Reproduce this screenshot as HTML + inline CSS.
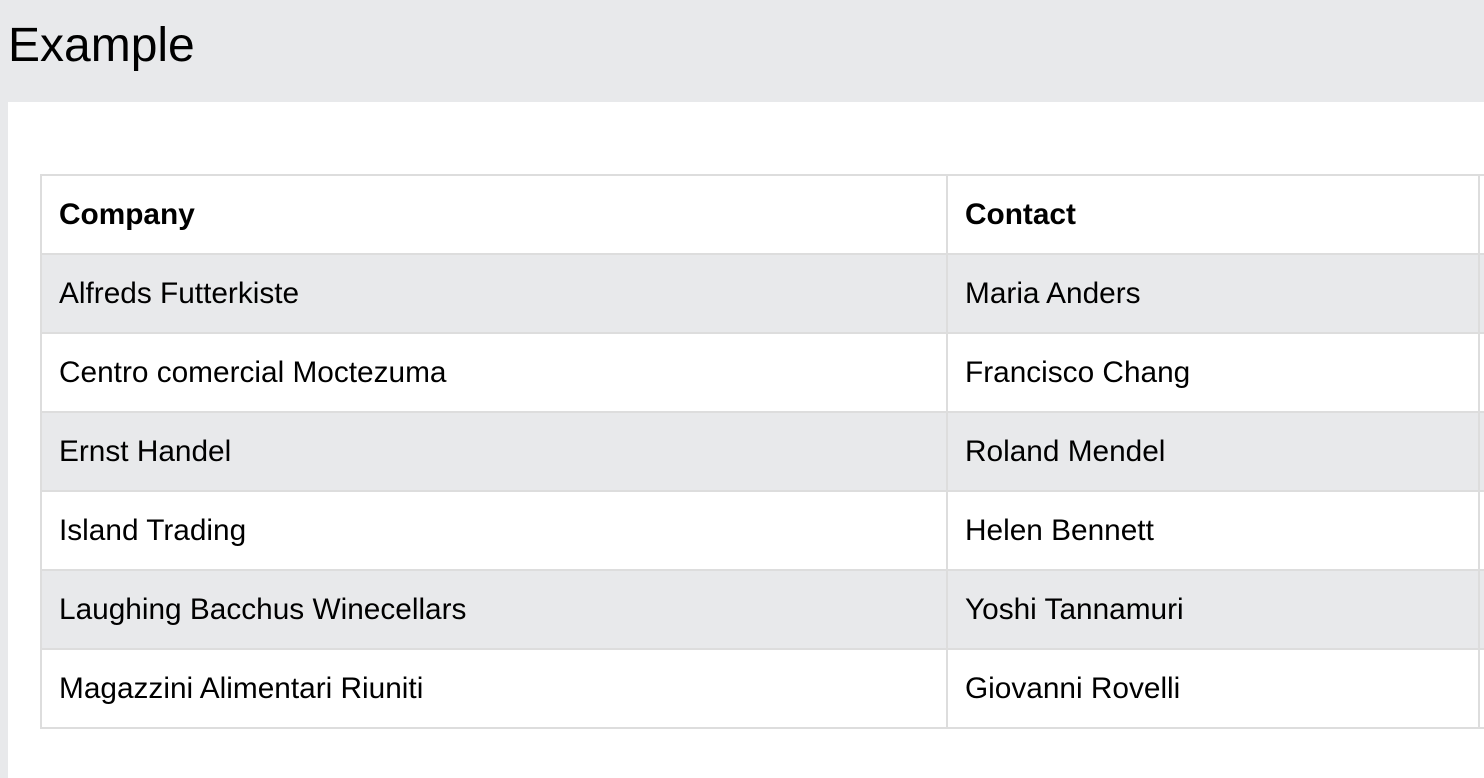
<!DOCTYPE html>
<html><head><style>
html,body{margin:0;padding:0;}
body{width:1484px;height:778px;overflow:hidden;background:#e8e9eb;font-family:"Liberation Sans",Arial,sans-serif;position:relative;}
h1{position:absolute;left:8px;top:18px;margin:0;font-weight:normal;font-size:48px;line-height:56px;color:#000;}
.panel{position:absolute;left:8px;top:102px;width:1476px;height:676px;background:#fff;overflow:hidden;}
table{position:absolute;left:32px;top:72px;border-collapse:collapse;table-layout:fixed;width:1480px;}
td,th{border:2px solid #dddddd;height:79px;padding:0 0 0 17px;text-align:left;font-size:29.8px;color:#000;box-sizing:border-box;white-space:nowrap;overflow:hidden;}
th{font-weight:bold;background:#fff;}
tr:nth-child(even) td{background:#e8e9eb;}
tr:nth-child(odd) td{background:#fff;}
col.a{width:906px;} col.b{width:532px;} col.c{width:42px;}
</style></head><body>
<h1>Example</h1>
<div class="panel">
<table>
<colgroup><col class="a"><col class="b"><col class="c"></colgroup>
<tr><th>Company</th><th>Contact</th><th></th></tr>
<tr><td>Alfreds Futterkiste</td><td>Maria Anders</td><td></td></tr>
<tr><td>Centro comercial Moctezuma</td><td>Francisco Chang</td><td></td></tr>
<tr><td>Ernst Handel</td><td>Roland Mendel</td><td></td></tr>
<tr><td>Island Trading</td><td>Helen Bennett</td><td></td></tr>
<tr><td>Laughing Bacchus Winecellars</td><td>Yoshi Tannamuri</td><td></td></tr>
<tr><td>Magazzini Alimentari Riuniti</td><td>Giovanni Rovelli</td><td></td></tr>
</table>
</div>
</body></html>
